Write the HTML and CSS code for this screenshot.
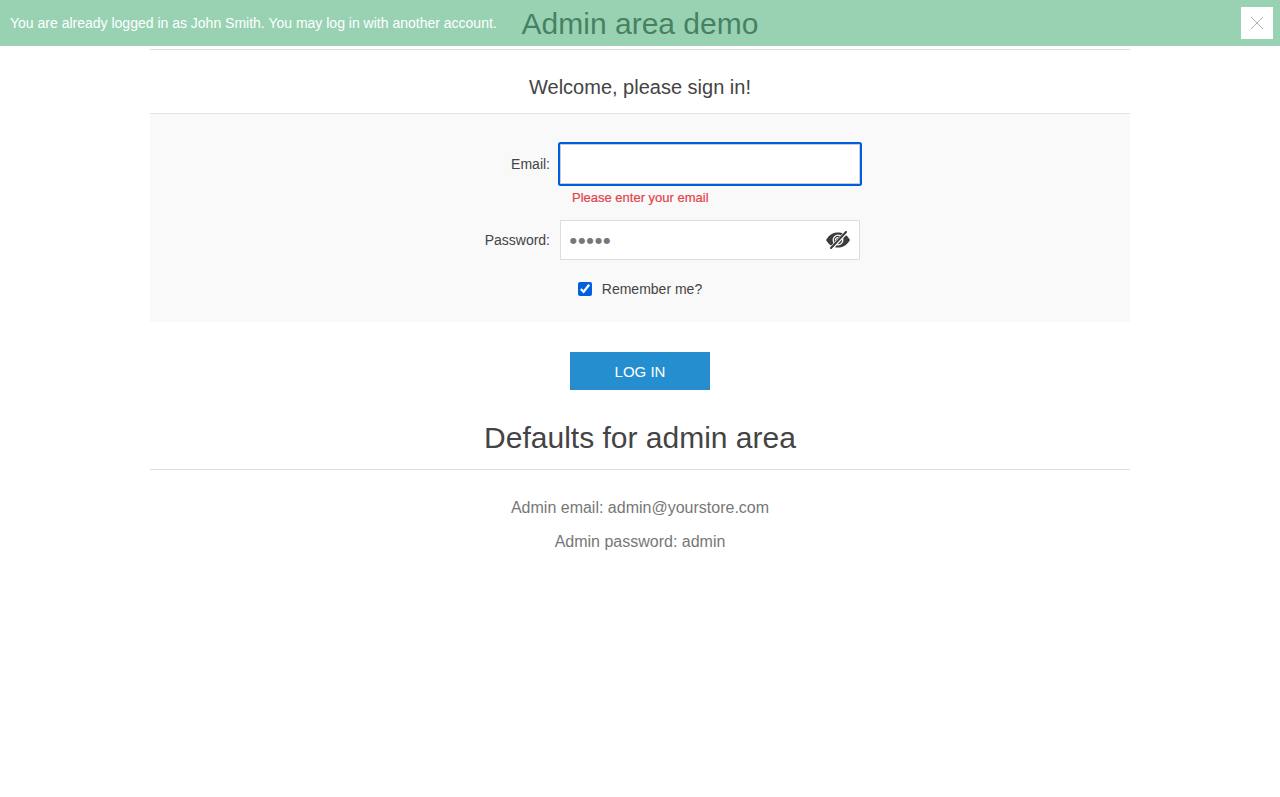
FILE: index.html
```
<!DOCTYPE html>
<html lang="en">
<head>
<meta charset="utf-8">
<title>Admin area demo</title>
<link rel="stylesheet" href="styles.css">
</head>
<body>
<div class="notification">
  <p class="notification-text">You are already logged in as John Smith. You may log in with another account.</p>
  <button class="notification-close" type="button" aria-label="Close">
    <svg width="12" height="12" viewBox="0 0 12 12" shape-rendering="crispEdges"><path d="M0 0L12 12M12 0L0 12" stroke="#777" fill="none"/></svg>
  </button>
</div>
<main class="page">
  <h1 class="page-title">Admin area demo</h1>
  <form class="login">
    <h2 class="login-title">Welcome, please sign in!</h2>
    <div class="fields">
      <div class="row">
        <label class="label" for="email">Email:</label>
        <input class="field field-focused" id="email" type="email">
      </div>
      <p class="error">Please enter your email</p>
      <div class="row">
        <label class="label" for="password">Password:</label>
        <div class="password-box">
          <input class="field field-masked" id="password" type="text" value="●●●●●">
          <svg class="eye" width="24" height="18" viewBox="0 0 24 18">
            <path d="M0 9C3.500 3 8 1.500 12 1.500s8.500 1.500 12 7.500c-3.500 6-8 7.500-12 7.500S3.500 15 0 9Z" fill="#3c3c3c"/>
            <circle cx="12" cy="9" r="4.800" fill="none" stroke="#fff" stroke-width="1.300"/>
            <path d="M9.500 9.500A2.500 2.500 0 0 1 12 6.500" fill="none" stroke="#fff" stroke-width="1.200"/>
            <path d="M4.500 18L20.500 1" stroke="#fff" stroke-width="4"/>
            <path d="M5 17L20 1" stroke="#3c3c3c" stroke-width="2" stroke-linecap="round"/>
          </svg>
        </div>
      </div>
      <div class="remember">
        <input class="checkbox" id="remember" type="checkbox" checked>
        <label for="remember">Remember me?</label>
      </div>
    </div>
    <button class="submit" type="button">LOG IN</button>
  </form>
  <h2 class="page-title page-title-spaced">Defaults for admin area</h2>
  <div class="defaults">
    <p>Admin email: admin@yourstore.com</p>
    <p>Admin password: admin</p>
  </div>
</main>
</body>
</html>
```
FILE: styles.css
```
* { margin: 0; box-sizing: border-box; }
body { background: #fff; color: #444; font: 14px "Liberation Sans", Arial, sans-serif; }
input, button { font: inherit; }
.notification {
  position: fixed; top: 0; left: 0; width: 100%; height: 46px; z-index: 1;
  display: flex; align-items: center; justify-content: space-between;
  padding: 0 7px 0 10px; background: #4bb07a; color: #fff; opacity: .567;
}
.notification-close {
  display: flex; align-items: center; justify-content: center;
  width: 32px; height: 32px; padding: 0; border: 0; background: #fff;
}
.page { width: 980px; margin: 0 auto; text-align: center; }
.page-title {
  height: 50px; padding-top: 7px; border-bottom: 1px solid #ddd;
  font-size: 30px; font-weight: 400; line-height: 34px;
}
.page-title-spaced { height: 56px; }
.login-title { height: 63px; padding-top: 26px; font-size: 20px; font-weight: 400; line-height: 23px; }
.fields { height: 209px; padding-top: 30px; border-top: 1px solid #e5e5e5; background: #f9f9f9; }
.row { display: flex; align-items: center; justify-content: flex-start; gap: 10px; }
.label { width: 400px; text-align: right; }
.field {
  display: block; width: 300px; height: 40px; padding: 0 8px;
  border: 1px solid #ddd; border-radius: 0; background: #fff; color: #777; font-size: 14px;
}
.field-masked { padding-left: 9px; font-family: "DejaVu Sans", sans-serif; font-size: 8px; letter-spacing: 1.4px; }
.field-focused { border-color: #ccc; border-radius: .5px; outline: 2px solid #005fe0; outline-offset: 0; }
.error {
  height: 36px; padding: 6px 0 0 422px; text-align: left;
  color: #e4434b; font-size: 13px; line-height: 15px; -webkit-text-stroke: .2px #e4434b;
}
.password-box { position: relative; }
.eye { position: absolute; right: 10px; top: 11px; }
.remember { display: flex; align-items: center; justify-content: center; gap: 10px; margin-top: 21px; }
.checkbox { width: 14px; height: 14px; margin: 0; accent-color: #005fe0; }
.submit {
  display: block; width: 140px; height: 38px; margin: 30px auto 24px; padding: 0;
  border: 0; background: #248ece; color: #fff; font-size: 15px;
}
.defaults { padding-top: 29px; color: #777; font-size: 16px; line-height: 18px; }
.defaults p { margin-bottom: 16px; }
```
